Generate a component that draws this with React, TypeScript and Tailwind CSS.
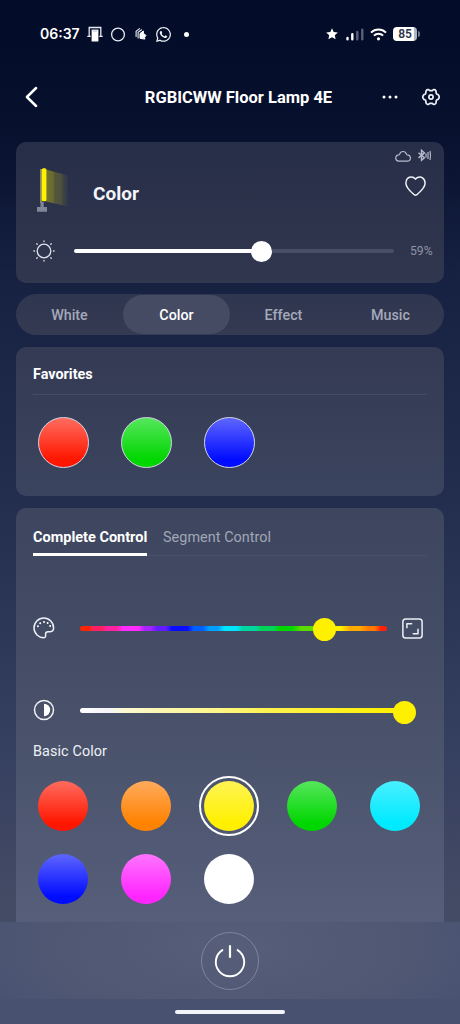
import type { ReactNode } from "react";
import { FaWhatsapp } from "react-icons/fa";

type IconProps = { className?: string };

function Notch({ className }: IconProps) {
  return (
    <svg viewBox="0 0 16 16" className={className} fill="none">
      <path d="M2.2 10.5V1.5h11.6v9" stroke="#e8ecf6" strokeWidth="1.3" />
      <path d="M.3 10.3h3.4M12.3 10.3h3.4" stroke="#e8ecf6" strokeWidth="1.3" />
      <path d="M4.600 3.600h6.800v11.900H4.600z" fill="#fff" />
      <path d="M5.600 4.300l1 .8h2.800l1-.8" stroke="#9aa0b4" strokeWidth=".7" />
    </svg>
  );
}

function Cards({ className }: IconProps) {
  return (
    <svg viewBox="0 0 12 14" className={className} fill="none">
      <path d="M1.100 9.500V4.200L4.600 1.600M3.100 10.900V5.400l3.500-2.600" stroke="#e8ecf6" strokeWidth="1.100" strokeLinecap="round" />
      <path d="M5 6.500 8.400 4v3.800l1.200-.7 1.300 1.400-1.300 1.800.2 1.800-1.900-.3-2.900-.5z" fill="#fff" stroke="#fff" strokeWidth="1" strokeLinejoin="round" />
    </svg>
  );
}

function StatusBar() {
  return (
    <div className="flex h-[68px] shrink-0 items-center justify-between pl-10 pr-[40px]">
      <div className="flex items-center">
        <span className="w-[47px] font-['Inter'] text-[14px] font-semibold leading-none">06:37</span>
        <Notch className="h-4 w-4" />
        <svg viewBox="0 0 16 16" className="ml-[7px] h-4 w-4" fill="none">
          <circle cx="8" cy="8.500" r="6.400" stroke="#e8ecf6" strokeWidth="1.300" />
        </svg>
        <Cards className="ml-[9px] h-[14px] w-3" />
        <FaWhatsapp className="ml-[8px] h-[17px] w-[17px] text-[#eef1f8]" />
        <span className="ml-[12px] h-[5px] w-[5px] rounded-full bg-white" />
      </div>
      <div className="flex items-center">
        <svg viewBox="0 0 12 12" className="h-3 w-3" fill="#fff">
          <path d="m6 .3 1.700 3.700 4.100.5-3 2.800.8 4L6 9.300l-3.600 2 .8-4-3-2.800L4.300 4z" />
        </svg>
        <svg viewBox="0 0 18 13" className="ml-[8px] h-[13px] w-[18px]" strokeLinecap="round" strokeWidth="2.400">
          <path d="M1.500 11.300v-1.400M6.300 11.300V6.300" stroke="#fff" />
          <path d="M11.300 11.300V3.900M16.300 11.300V1.700" stroke="#596078" />
        </svg>
        <svg viewBox="0 0 17 13" className="ml-[6px] h-[13px] w-[17px]" fill="none" stroke="#fff" strokeWidth="2">
          <path d="M1 4.600a10.600 10.600 0 0 1 15 0M3.900 7.600a6.500 6.500 0 0 1 9.200 0" />
          <circle cx="8.500" cy="10.800" r="1.600" fill="#fff" stroke="none" />
        </svg>
        <div className="ml-[6px] flex items-center">
          <span className="flex h-[14px] w-6 items-center justify-center rounded-[4px] bg-gradient-to-r from-white from-85% to-[#aeb3c2] to-90% text-[12px] font-semibold leading-none text-[#303548]">85</span>
          <span className="ml-px h-[6px] w-[2px] rounded-r bg-[#6c7389]" />
        </div>
      </div>
    </div>
  );
}

function Header() {
  return (
    <header className="grid h-[58px] shrink-0 grid-cols-[115px_1fr_103px] items-center pl-6 pr-[19px]">
      <svg viewBox="0 0 14 22" className="h-[22px] w-[14px]" fill="none" stroke="#fff" strokeWidth="2.500" strokeLinecap="round" strokeLinejoin="round">
        <path d="M12.100 2 2.900 11l9.200 9" />
      </svg>
      <h1 className="whitespace-nowrap pt-[2px] text-center text-[16.500px] font-bold leading-none">RGBICWW Floor Lamp 4E</h1>
      <div className="flex items-center justify-end gap-[22px]">
        <svg viewBox="0 0 18 4" className="h-1 w-[18px]" fill="#fff">
          <circle cx="3" cy="2" r="1.500" />
          <circle cx="9" cy="2" r="1.500" />
          <circle cx="15" cy="2" r="1.500" />
        </svg>
        <svg viewBox="0 0 20 20" className="h-5 w-5" fill="none" stroke="#eef1f9" strokeWidth="1.700" strokeLinejoin="round">
          <path d="M18 9Q18.500 10 18 11L17 12.500L15.600 13Q15 13.600 15.200 14.700L14.800 16.400Q14.200 17.400 13.200 17.400L12.400 17.300L11.300 16.400H8.700L7.600 17.300L6.800 17.400Q5.800 17.400 5.200 16.400L4.800 14.700Q5 13.600 4.400 13L3 12.500L2 11Q1.500 10 2 9L3 7.500L4.400 7Q5 6.400 4.800 5.300L5.200 3.600Q5.800 2.600 6.800 2.600L7.600 2.700L8.700 3.600H11.300L12.400 2.700L13.200 2.600Q14.200 2.600 14.800 3.600L15.200 5.300Q15 6.400 15.600 7L17 7.500z" />
          <circle cx="10" cy="10" r="2.100" />
        </svg>
      </div>
    </header>
  );
}

function LampPicture() {
  return (
    <svg viewBox="0 0 32 46" className="h-[46px] w-8">
      <defs>
        <linearGradient id="glow" x1="0" x2="1">
          <stop offset="0" stopColor="#747432" />
          <stop offset=".36" stopColor="#66682f" />
          <stop offset=".37" stopColor="#56583b" />
          <stop offset=".72" stopColor="#4c4f3c" />
          <stop offset=".73" stopColor="#434840" />
          <stop offset="1" stopColor="#30364a" />
        </linearGradient>
      </defs>
      <path d="M9 1.500 31 7.500v31L9 33.500z" fill="url(#glow)" />
      <path d="M3.500 34h3.200V39H10v4.800H0V39h3.500z" fill="#81879b" />
      <path d="M3 1h2v34H3z" fill="#8a8860" />
      <rect x="4.800" y=".3" width="4.600" height="33" rx="1.500" fill="#fff200" />
    </svg>
  );
}

function BrightnessCard() {
  return (
    <section className="flex h-[141px] shrink-0 flex-col rounded-[10px] bg-gradient-to-b from-[#272e47] to-[#31374f] pl-[17px] pr-[10px]">
      <div className="flex h-[78px] items-start">
        <div className="ml-[4px] mt-[26px]"><LampPicture /></div>
        <h2 className="ml-[24px] mt-[42px] text-[19px] font-bold leading-5 text-[#f3f5fb]">Color</h2>
        <div className="ml-auto flex flex-col items-end">
          <div className="mr-[2px] mt-[7px] flex items-center gap-[6px]">
            <svg viewBox="0 0 16 12" className="h-3 w-4" fill="none" stroke="#b6bccd" strokeWidth="1.200">
              <path d="M4 11.200a3.200 3.200 0 0 1-.1-6.400 1 1 0 0 0 .8-.8 3.500 3.500 0 0 1 6.700 0 1 1 0 0 0 .8.800 3.200 3.200 0 0 1 0 6.400z" />
            </svg>
            <svg viewBox="0 0 15 13" className="h-[13px] w-[15px]" fill="none" stroke="#b6bccd" strokeWidth="1.200">
              <path d="m1.500 3.700 6 5L4.500 11.300v-10l3 2.600-6 5" strokeWidth="1.400" />
              <path d="M9 4.500v4M11 3v7M13 2q1 4.500 0 9" />
            </svg>
          </div>
          <svg viewBox="0 0 21 20" className="mr-[8px] mt-[14px] h-5 w-[21px]" fill="none" stroke="#edf0f8" strokeWidth="1.500" strokeLinejoin="round">
            <path d="M10.500 3.100Q8.600.8 6 .9 1 1.300.9 7.200C1 12 5.500 15.500 9.200 18.700q1.300 1 2.600 0C15.500 15.500 20 12 20.100 7.200 20 1.300 15 .9 15 .9q-2.600-.1-4.500 2.200z" />
          </svg>
        </div>
      </div>
      <div className="flex h-[62px] items-center">
        <svg viewBox="0 0 22 22" className="h-[22px] w-[22px]" fill="none" stroke="#dde2ee" strokeWidth="1.300" strokeLinecap="round">
          <circle cx="11" cy="11" r="6.800" />
          <path d="M11 .9v.6M11 20.500v.6M.9 11h.6M20.500 11h.6M3.800 3.800l.4.400M17.800 17.800l.4.400M3.800 18.200l.4-.4M17.800 4.200l.4-.4" />
        </svg>
        <div className="ml-[19px] flex w-[320px] shrink-0 items-center">
          <span className="h-1 w-[180px] rounded-l-full bg-white" />
          <span className="-ml-[3px] h-[21px] w-[21px] rounded-full bg-white" />
          <span className="h-1 flex-1 rounded-r-full bg-[#484e65]" />
        </div>
        <span className="ml-[16px] pt-px text-[12.200px] leading-none text-[#8d93a5]">59%</span>
      </div>
    </section>
  );
}

function ModeTabs() {
  return (
    <nav className="mt-[11px] grid h-[41px] shrink-0 grid-cols-4 items-center rounded-full bg-gradient-to-b from-[#2f364f] to-[#343a52] text-center text-[14.300px] font-medium text-[#a4a9ba]">
      <span className="pt-[2px]">White</span>
      <span className="flex h-[39px] items-center justify-center rounded-full bg-[#454b63] pt-[2px] text-white">Color</span>
      <span className="pt-[2px]">Effect</span>
      <span className="pt-[2px]">Music</span>
    </nav>
  );
}

const favoriteColors = [
  "from-[#ff6759] to-[#ff1600]",
  "from-[#51e657] to-[#00d600]",
  "from-[#5961ff] to-[#000cff]",
];

function Favorites() {
  return (
    <section className="mt-3 h-[149px] shrink-0 rounded-[10px] bg-gradient-to-b from-[#343a54] to-[#3b445e] px-[17px]">
      <h3 className="flex h-12 items-center border-b border-[#454b63] pt-[10px] text-[14.400px] font-bold leading-none">Favorites</h3>
      <div className="flex gap-[32px] pl-[4.500px] pt-[21.500px]">
        {favoriteColors.map((color) => (
          <span key={color} className={"h-[51px] w-[51px] rounded-full border border-[#d5d6e8] bg-linear-to-b/srgb from-5% to-85% " + color} />
        ))}
      </div>
    </section>
  );
}

function SliderRow({ icon, children }: { icon: ReactNode; children: ReactNode }) {
  return (
    <div className="flex h-[24px] items-center">
      <div className="w-[47px]">{icon}</div>
      {children}
    </div>
  );
}

const basicColors = [
  "from-[#ff6759] to-[#ff1600]",
  "from-[#ffa957] to-[#ff8200]",
  "from-[#fff44f] to-[#fff000]",
  "from-[#51e657] to-[#00d600]",
  "from-[#45efff] to-[#00eaff]",
  "from-[#5961ff] to-[#000cff]",
  "from-[#ff70ff] to-[#ff25ff]",
  "from-white to-white",
];

function ColorControl() {
  return (
    <section className="mt-[12px] min-h-0 flex-1 rounded-t-[10px] bg-gradient-to-b from-[#3d455f] via-[#485169] to-[#565e7a] px-[17px]">
      <div className="flex h-[48px] items-end gap-[16px] border-b border-[#4a5068] text-[14.400px] leading-none">
        <span className="-mb-px flex h-[25px] w-[114px] items-start whitespace-nowrap border-b-[3px] border-white text-[14.500px] font-bold">Complete Control</span>
        <span className="flex h-[24px] items-start whitespace-nowrap tracking-[0.050px] text-[#a1a7b6]">Segment Control</span>
      </div>
      <div className="mt-[60px]">
        <SliderRow
          icon={
            <svg viewBox="0 0 22 22" className="h-[22px] w-[22px]" fill="none" stroke="#edf1f7" strokeWidth="1.500" strokeLinejoin="round">
              <path d="M11 20.700A9.800 9.800 0 1 1 20.600 11q0 3.400-3.400 3.700H15q-2.300.2-2.400 2v2.600q-.1 1.400-1.600 1.400z" />
              <g fill="#fff" stroke="none">
                <circle cx="4.900" cy="9.200" r="1" />
                <circle cx="7.200" cy="6.300" r="1" />
                <circle cx="11" cy="4.900" r="1" />
                <circle cx="14.600" cy="6" r="1" />
                <circle cx="17.100" cy="9" r="1" />
              </g>
            </svg>
          }
        >
          <div className="relative w-[307px]">
            <div className="h-[5px] w-full rounded-full bg-[linear-gradient(90deg,#ff2500_0_3%,#ff2061_4%_7%,#ff22a0_9%_12%,#ff2cff_14%_19%,#a923ff_21%_23%,#641dff_25%_28%,#080cff_30%_35%,#0060ff_37%_40%,#009fff_42%_45%,#00e4ff_47%_51%,#00d7a0_53%_57%,#00d35a_59%_63%,#00d600_65%_69%,#5cdc00_72%_76%,#fff000_78%_85%,#ffaa00_88%_91%,#ff7800_94%_96%,#ff2008_98%_100%)]" />
            <span className="absolute -top-[7.500px] left-[233px] h-[23px] w-[23px] rounded-full bg-[#fff000]" />
          </div>
          <svg viewBox="0 0 21 21" className="ml-[15px] h-[21px] w-[21px]" fill="none" stroke="#eceff6" strokeWidth="1.500" strokeLinejoin="round" strokeLinecap="round">
            <rect x=".9" y=".9" width="19.200" height="19.200" rx="2.800" />
            <path d="M4.900 9.800v-4h4.800M16 11.200v4.500h-4.800" />
          </svg>
        </SliderRow>
      </div>
      <div className="mt-[58px]">
        <SliderRow
          icon={
            <svg viewBox="0 0 22 22" className="h-[22px] w-[22px]" fill="none">
              <circle cx="11" cy="11" r="9.500" stroke="#edf1f7" strokeWidth="1.500" />
              <path d="M11 4.800a6.200 6.200 0 0 1 0 12.400z" fill="#fff" />
            </svg>
          }
        >
          <div className="flex w-[337px] items-center">
            <span className="h-[5px] w-[315px] rounded-l-full bg-[linear-gradient(90deg,#ffffff_0%,#f4f4fa_9%,#fdfad3_14%,#fbf7b3_25%,#fff789_43%,#fff24e_60%,#fff000_100%)]" />
            <span className="relative top-[2px] -ml-[2px] h-[23px] w-[23px] rounded-full bg-[#fff000]" />
          </div>
        </SliderRow>
      </div>
      <h3 className="mt-[21px] text-[14.400px] leading-[18px] tracking-[0.100px] text-[#edf0f6]">Basic Color</h3>
      <div className="mt-[20px] grid w-[384px] grid-cols-[repeat(5,50px)] gap-x-[33px] gap-y-[23px] pl-[5px]">
        {basicColors.map((color, index) => (
          <span
            key={color}
            className={
              "h-[50px] w-[50px] rounded-full bg-linear-to-b/srgb from-5% to-85% " +
              color +
              (index === 2 ? " outline-2 outline-offset-[3px] outline-white" : "")
            }
          />
        ))}
      </div>
    </section>
  );
}

function Footer() {
  return (
    <footer className="flex h-[102px] shrink-0 flex-col items-center bg-[radial-gradient(ellipse_55%_100%_at_50%_25%,#575e7a_0%,#515873_60%,#4a5472_100%)]">
      <div className="flex h-[77px] w-full items-center justify-center">
        <button className="flex h-[58px] w-[58px] items-center justify-center rounded-full border border-[#7f849b]">
          <svg viewBox="0 0 34 34" className="h-[34px] w-[34px]" fill="none" stroke="#fff" strokeWidth="1.900" strokeLinecap="round">
            <path d="M9.400 6.100a14.200 14.200 0 1 0 15.200 0" />
            <path d="M17 2v11" strokeWidth="2.200" />
          </svg>
        </button>
      </div>
      <div className="flex h-[25px] w-full justify-center bg-[#485270] pt-[11px]">
        <span className="h-1 w-[110px] rounded-full bg-[#f3f4f9]" />
      </div>
    </footer>
  );
}

export default function App() {
  return (
    <div className="flex h-[1024px] w-[460px] flex-col overflow-hidden bg-[linear-gradient(180deg,#020b27_0px,#07102d_126px,#172142_285px,#232d4d_500px,#343e5f_730px,#454c65_922px)] font-['Roboto',sans-serif] text-white">
      <StatusBar />
      <Header />
      <main className="flex min-h-0 flex-1 flex-col overflow-hidden px-[16px] pt-4">
        <BrightnessCard />
        <ModeTabs />
        <Favorites />
        <ColorControl />
      </main>
      <Footer />
    </div>
  );
}
